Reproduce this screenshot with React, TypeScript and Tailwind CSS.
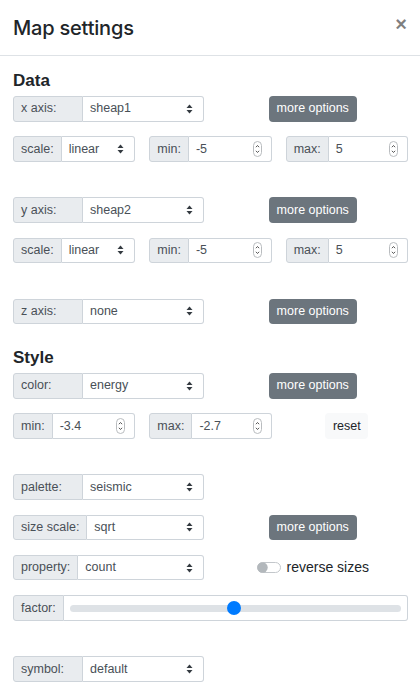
import React from 'react';

const FONT = { fontFamily: '"Liberation Sans", Arial, sans-serif' };
const TITLE_FONT = { fontFamily: 'Inter, "Liberation Sans", Arial, sans-serif' };

const LABEL =
  'flex items-center shrink-0 px-[7px] bg-[#e9ecef] border border-[#ced4da] rounded-l-[3px] text-[#495057] whitespace-nowrap';
const FIELD =
  'flex flex-1 min-w-0 items-center justify-between pl-[7px] pr-[10px] bg-white border border-l-0 border-[#ced4da] rounded-r-[3px] text-[#495057]';

function SelectArrows() {
  return (
    <svg width="7" height="10" viewBox="0 0 7 10" className="shrink-0">
      <path d="M0.5 4 L3.5 0.6 L6.5 4 Z" fill="#343a40" />
      <path d="M0.5 6 L3.5 9.4 L6.5 6 Z" fill="#343a40" />
    </svg>
  );
}

function Spinner() {
  return (
    <svg width="9" height="16" viewBox="0 0 9 16" className="shrink-0 mr-[-1px]">
      <rect x="0.5" y="0.5" width="8" height="15" rx="4" fill="white" stroke="#b9bcbf" />
      <path d="M2.9 6.2 L4.5 4.5 L6.1 6.2" fill="none" stroke="#555" strokeWidth="1" />
      <path d="M2.9 9.8 L4.5 11.5 L6.1 9.8" fill="none" stroke="#555" strokeWidth="1" />
    </svg>
  );
}

function SelectGroup({ label, value, labelW = 'w-[70px]' }: { label: string; value: string; labelW?: string }) {
  return (
    <div className="flex h-full">
      <span className={`${LABEL} ${labelW}`}>{label}</span>
      <div className={FIELD}>
        <span>{value}</span>
        <SelectArrows />
      </div>
    </div>
  );
}

function NumberGroup({ label, value }: { label: string; value: string }) {
  return (
    <div className="flex h-full">
      <span className={LABEL}>{label}</span>
      <div className={FIELD}>
        <span>{value}</span>
        <Spinner />
      </div>
    </div>
  );
}

function MoreOptions() {
  return (
    <div className="flex items-center justify-center">
      <button className="h-full px-[8px] rounded-[4px] bg-[#6c757d] text-white">more options</button>
    </div>
  );
}

function SelectRow({ label, value, labelW, more = true }: { label: string; value: string; labelW?: string; more?: boolean }) {
  return (
    <div className="grid grid-cols-2 gap-x-[14px] h-[25.5px]">
      <SelectGroup label={label} value={value} labelW={labelW} />
      {more ? <MoreOptions /> : <div />}
    </div>
  );
}

function ScaleRow() {
  return (
    <div className="grid grid-cols-3 gap-x-[14px] h-[25.5px]">
      <SelectGroup label="scale:" value="linear" labelW="" />
      <NumberGroup label="min:" value="-5" />
      <NumberGroup label="max:" value="5" />
    </div>
  );
}

function Heading({ children, className = '' }: { children: React.ReactNode; className?: string }) {
  return <h6 className={`h-[20px] leading-[20px] mb-[5px] text-[17px] font-bold text-[#212529] ${className}`}>{children}</h6>;
}

export default function App() {
  return (
    <div className="w-[420px] h-[695px] bg-white overflow-hidden text-[12.5px]" style={FONT}>
      {/* header */}
      <div className="flex items-center justify-between h-[56px] pl-[13px] pr-[13px] border-b border-[#dee2e6]">
        <h5 className="text-[20px] leading-[24px] font-medium text-[#212529] tracking-[-0.2px]" style={TITLE_FONT}>
          Map settings
        </h5>
        <span className="mb-[8px] text-[20px] leading-none font-bold text-black/50">×</span>
      </div>

      <div className="px-[13px] pr-[12px]">
        {/* Data */}
        <Heading className="mt-[15px]">Data</Heading>
        <div className="flex flex-col gap-[35.5px]">
          <div className="flex flex-col gap-[14.8px]">
            <SelectRow label="x axis:" value="sheap1" />
            <ScaleRow />
          </div>
          <div className="flex flex-col gap-[14.8px]">
            <SelectRow label="y axis:" value="sheap2" />
            <ScaleRow />
          </div>
          <SelectRow label="z axis:" value="none" />
        </div>

        {/* Style */}
        <Heading className="mt-[24px]">Style</Heading>
        <div className="flex flex-col gap-[35.5px]">
          <div className="flex flex-col gap-[14.8px]">
            <SelectRow label="color:" value="energy" />
            <div className="grid grid-cols-3 gap-x-[14px] h-[25.5px]">
              <NumberGroup label="min:" value="-3.4" />
              <NumberGroup label="max:" value="-2.7" />
              <div className="flex items-center justify-center">
                <button className="h-full px-[7.5px] rounded-[4px] bg-[#f8f9fa] text-[#212529]">reset</button>
              </div>
            </div>
          </div>

          <div className="flex flex-col gap-[14.8px]">
            <SelectRow label="palette:" value="seismic" more={false} />
            <SelectRow label="size scale:" value="sqrt" labelW="" />
            <div className="grid grid-cols-2 gap-x-[14px] h-[25.5px]">
              <SelectGroup label="property:" value="count" labelW="" />
              <div className="flex items-center justify-center gap-[6px]">
                <svg width="24" height="11" viewBox="0 0 24 11">
                  <rect x="0.5" y="0.5" width="23" height="10" rx="5" fill="#fff" stroke="#c3c7cb" />
                  <circle cx="5.5" cy="5.5" r="5.2" fill="#b3b8bc" />
                </svg>
                <span className="text-[14px] text-[#212529]">reverse sizes</span>
              </div>
            </div>
            <div className="flex h-[25.5px]">
              <span className={LABEL}>factor:</span>
              <div className="flex flex-1 items-center px-[6px] bg-white border border-l-0 border-[#ced4da] rounded-r-[3px]">
                <div className="relative flex-1 h-[7px] rounded-full bg-[#dee2e6]">
                  <div className="absolute top-1/2 left-[49.5%] w-[14px] h-[14px] -ml-[7px] -mt-[7px] rounded-full bg-[#007bff]" />
                </div>
              </div>
            </div>
          </div>

          <SelectRow label="symbol:" value="default" more={false} />
        </div>
      </div>
    </div>
  );
}
